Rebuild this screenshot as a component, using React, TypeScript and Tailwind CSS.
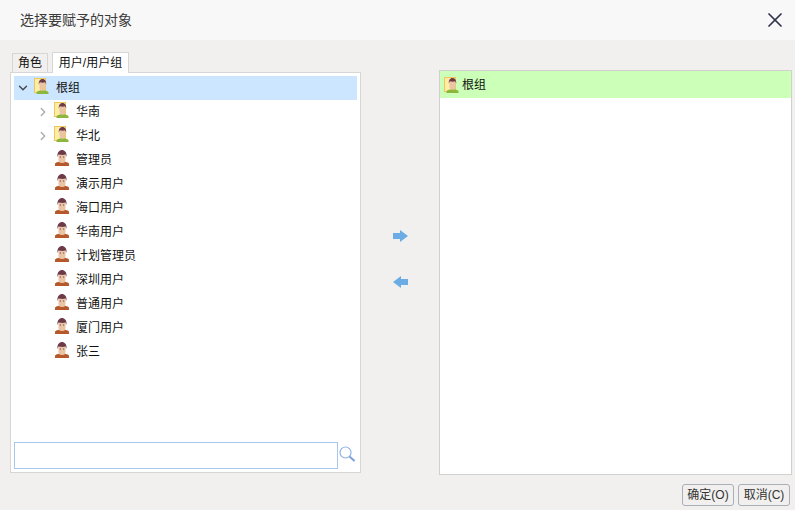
import { ChevronDown, ChevronRight, X } from 'lucide-react'

const users = ['管理员', '演示用户', '海口用户', '华南用户', '计划管理员', '深圳用户', '普通用户', '厦门用户', '张三']

function UserIcon() {
  return (
    <svg width="14" height="16" viewBox="0 0 14 16" className="mb-[4px] shrink-0">
      <path d="M0 16v-2c0-1.200 1.500-1.700 4-2.200h6c2.500.5 4 1 4 2.200v2z" fill="#b5592d" />
      <rect x="3.500" y="3" width="7" height="10" rx="3" fill="#eac4a4" />
      <path d="M2.500 7C2 2 4.500 0 7 0s5 2 4.500 7l-1-2.500c-2 .6-4 .6-7 0z" fill="#6e3a48" />
      <rect x="4.800" y="6.500" width="1.200" height="1" fill="#6b4a40" />
      <rect x="8" y="6.500" width="1.200" height="1" fill="#6b4a40" />
    </svg>
  )
}

function GroupIcon({ className }: { className?: string }) {
  return (
    <svg width="16" height="16" viewBox="0 0 16 16" className={`shrink-0 ${className ?? ''}`}>
      <rect x="0.500" y="0.500" width="11" height="14" fill="#fdeea6" stroke="#eec65c" />
      <path d="M2.500 16v-1.500c0-1 2-1.700 4-2.200h4c2 .5 4 1.200 4 2.200V16z" fill="#8db63c" />
      <rect x="5.500" y="3" width="6" height="9.500" rx="2.800" fill="#eac4a4" />
      <path d="M4.800 6.500C4.500 2.500 6.500 1 8.500 1s4 1.500 3.700 5.500l-1-2.200c-1.700.5-3.200.5-5.400 0z" fill="#6e3a48" />
    </svg>
  )
}

function TreeRow({ label, expandable }: { label: string; expandable?: boolean }) {
  return (
    <div className="flex h-6 items-center pl-[19px]">
      <span className="flex w-[21px] shrink-0 justify-center pr-px">
        {expandable && <ChevronRight size={14} strokeWidth={2.2} className="text-[#aaaaaa]" />}
      </span>
      {expandable ? (
        <GroupIcon className="mb-1" />
      ) : (
        <span className="flex w-4 justify-center">
          <UserIcon />
        </span>
      )}
      <span className="ml-[6px] text-xs text-[#111111]">{label}</span>
    </div>
  )
}

export default function App() {
  return (
    <div className="flex h-[510px] w-[795px] flex-col overflow-hidden bg-[#f1f0ee] font-['Liberation_Sans','Noto_Sans_CJK_SC',sans-serif]">
      <header className="flex h-10 shrink-0 items-center justify-between bg-[#f8f8f8] pl-5 pr-2">
        <span className="text-sm text-[#3b3b3b]">选择要赋予的对象</span>
        <X size={24} strokeWidth={1.700} className="text-[#33334a]" />
      </header>

      <div className="flex flex-1 items-start pt-[11px]">
        <section className="ml-[10px] w-[351px]">
          <div className="flex h-[21px] items-end gap-1 pl-[2px]">
            <div className="flex h-[19px] w-9 items-center justify-center border border-b-0 border-[#d6d6d6] bg-[#f1f0ee] text-xs text-[#111111]">
              角色
            </div>
            <div className="relative top-px flex h-[21px] w-[77px] items-center justify-center border border-b-0 border-[#d6d6d6] bg-white text-xs text-[#111111]">
              用户/用户组
            </div>
          </div>
          <div className="flex h-[401px] flex-col border border-[#d6d6d6] bg-white px-[3px] pt-[3px]">
            <div className="flex h-6 items-center bg-[#cde6ff]">
              <span className="flex w-[17px] shrink-0 justify-center">
                <ChevronDown size={14} strokeWidth={2.400} className="text-[#444444]" />
              </span>
              <span className="w-[3px]" />
              <GroupIcon className="mb-1" />
              <span className="ml-[6px] text-xs text-[#111111]">根组</span>
            </div>
            <TreeRow label="华南" expandable />
            <TreeRow label="华北" expandable />
            {users.map((name) => (
              <TreeRow key={name} label={name} />
            ))}
            <div className="mt-auto mb-[3px] flex items-center">
              <input className="h-[27px] w-[324px] border border-[#a8c6ee] bg-white outline-none" />
              <svg width="16" height="16" viewBox="0 0 16 16" className="mb-[3px] ml-px">
                <circle cx="6.500" cy="6.500" r="5.500" fill="none" stroke="#8fb2e6" strokeWidth="1.200" />
                <path d="M10.500 10.500 15.500 15" stroke="#7fa3dc" strokeWidth="2" />
              </svg>
            </div>
          </div>
        </section>

        <div className="flex h-[402px] w-[78px] shrink-0 flex-col items-center justify-center gap-[34px] pt-[13px]">
          <svg width="15" height="12" viewBox="0 0 15 12">
            <path d="M0 3h7V0l8 6-8 6V9H0z" fill="#6cace4" />
          </svg>
          <svg width="15" height="12" viewBox="0 0 15 12">
            <path d="M15 3H8V0L0 6l8 6V9h7z" fill="#6cace4" />
          </svg>
        </div>

        <section className="mt-[19px] h-[405px] w-[353px] border border-[#d0d0d0] bg-white">
          <div className="flex h-[27px] items-center bg-[#ccffb8] pl-[4px]">
            <GroupIcon />
            <span className="ml-[2px] text-xs text-[#111111]">根组</span>
          </div>
        </section>
      </div>

      <footer className="flex h-[35px] shrink-0 items-start justify-end gap-1 pr-[5px] pt-[9px]">
        <button className="h-[22px] w-[52px] rounded-[3px] border border-[#a9b0ba] bg-[#f1f0ee] text-xs text-[#333333]">确定(O)</button>
        <button className="h-[22px] w-[52px] rounded-[3px] border border-[#a9b0ba] bg-[#f1f0ee] text-xs text-[#333333]">取消(C)</button>
      </footer>
    </div>
  )
}
